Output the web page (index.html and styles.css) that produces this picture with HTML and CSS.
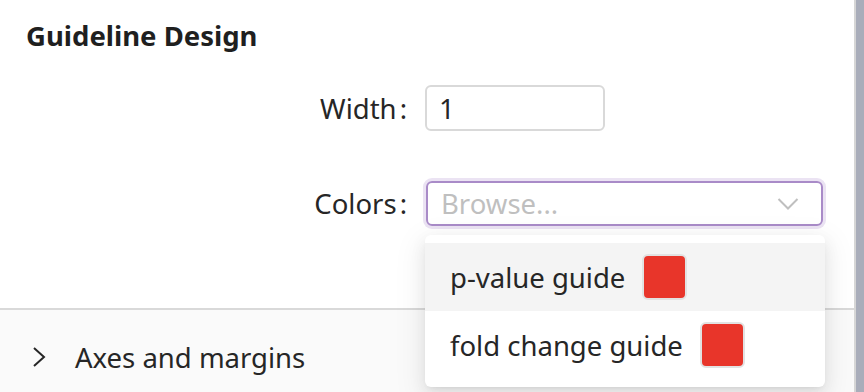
FILE: index.html
```html
<!DOCTYPE html>
<html lang="en">
<head>
    <meta charset="UTF-8">
    <title>Guideline Design</title>
    <link rel="stylesheet" href="styles.css">
</head>
<body>
<div id="page">
    <div id="panel">
        <div id="design">
            <h2>Guideline Design</h2>
            <div class="form-row">
                <label for="width-input">Width</label>
                <input id="width-input" value="1">
            </div>
            <div class="form-row">
                <label>Colors</label>
                <div id="colors-select">
                    <span class="placeholder">Browse...</span>
                    <svg class="chevron" width="22" height="14" viewBox="0 0 22 14">
                        <path d="M1.5 2 L11 11.5 L20.5 2" fill="none" stroke="#bfbfbf" stroke-width="2"/>
                    </svg>
                    <div id="colors-menu">
                        <div class="option active">
                            p-value guide <span class="swatch"></span>
                        </div>
                        <div class="option">
                            fold change guide <span class="swatch"></span>
                        </div>
                    </div>
                </div>
            </div>
        </div>
        <div class="collapse-header">
            <svg class="arrow" width="14" height="22" viewBox="0 0 14 22">
                <path d="M2 2 L12 11 L2 20" fill="none" stroke="#262626" stroke-width="2"/>
            </svg>
            <span>Axes and margins</span>
        </div>
    </div>
    <div id="scrollbar"></div>
</div>
</body>
</html>
```

FILE: styles.css
```css
body {
    margin: 0;
    font-family: "Noto Sans", sans-serif;
    color: #262626;
    background-color: #fff;
}

#page {
    display: flex;
    height: 392px;
    overflow: hidden;
}

#panel {
    flex: 1;
    border-right: 2px solid #d6d6d6;
    display: flex;
    flex-direction: column;
}

#scrollbar {
    width: 8px;
    background-color: #a9adba;
}

#design {
    height: 308px;
    padding: 0 0 0 26px;
}

h2 {
    margin: 0;
    padding-top: 15px;
    font-size: 27.5px;
    font-weight: bold;
    line-height: 42px;
    color: #1f1f1f;
}

.form-row {
    display: flex;
    align-items: center;
    margin-top: 28px;
}

.form-row + .form-row {
    margin-top: 50px;
}

.form-row > label {
    width: 381px;
    text-align: right;
    padding-right: 18px;
    font-size: 27.5px;
}

.form-row > label::after {
    content: ":";
    margin-left: 3px;
}

#width-input {
    width: 152px;
    height: 42px;
    border: 2px solid #d9d9d9;
    border-radius: 6px;
    padding: 0 12px;
    font-family: inherit;
    font-size: 27.5px;
    color: #262626;
    outline: none;
}

#colors-select {
    position: relative;
    width: 358px;
    height: 41px;
    border: 2px solid #a98bc8;
    border-radius: 6px;
    box-shadow: 0 0 0 3px #ebe3f3;
    display: flex;
    align-items: center;
    justify-content: space-between;
    padding: 0 22px 0 13px;
    margin-left: 1px;
}

.placeholder {
    color: #bfbfbf;
    font-size: 27.5px;
}

#colors-menu {
    position: absolute;
    top: 52px;
    left: -3px;
    width: 400px;
    padding: 8px 0;
    background-color: #fff;
    border-radius: 6px;
    box-shadow: 0 6px 16px 0 rgba(0, 0, 0, .08), 0 3px 6px -4px rgba(0, 0, 0, .12), 0 9px 28px 8px rgba(0, 0, 0, .05);
}

.option {
    height: 68px;
    display: flex;
    align-items: center;
    padding-left: 25px;
    font-size: 27.5px;
    color: #262626;
}

.option.active {
    background-color: #f4f4f4;
}

.swatch {
    display: inline-block;
    width: 41px;
    height: 42px;
    margin-left: 17px;
    background-color: #e8352a;
    border: 2px solid #e2e2e2;
    border-radius: 6px;
}

.collapse-header {
    flex: 1;
    border-top: 2px solid #d9d9d9;
    background-color: #fafafa;
    display: flex;
    align-items: center;
    padding-left: 32px;
    font-size: 27.5px;
    padding-top: 12px;
}

.collapse-header .arrow {
    margin-right: 29px;
}
```
